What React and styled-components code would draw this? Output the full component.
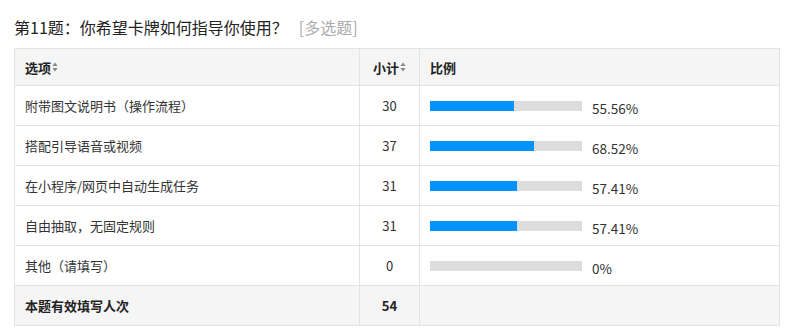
import React from "react";
import styled, { createGlobalStyle } from "styled-components";

const Global = createGlobalStyle`
  html, body { margin: 0; padding: 0; background: #fff; }
  body { font-family: "Noto Sans CJK SC", "Noto Sans", sans-serif; color: #333; }
`;

const Page = styled.div`
  padding: 16px 8px 0 14px;
`;

const Title = styled.div`
  font-size: 16px;
  line-height: 22px;
  color: #222;
  margin-bottom: 10px;
  display: flex;
  align-items: center;
`;

const Tag = styled.span`
  color: #aaa;
  margin-left: 11px;
`;

const Table = styled.table`
  width: 765px;
  border-collapse: collapse;
  table-layout: fixed;
  font-size: 13px;
`;

const Th = styled.th`
  height: 36px;
  padding: 0 0 0 ${(p) => (p.$center ? 0 : 10)}px;
  text-align: ${(p) => (p.$center ? "center" : "left")};
  background: #f5f5f5;
  border: 1px solid #e3e3e3;
  font-weight: 700;
  color: #222;
`;

const Td = styled.td`
  height: 39px;
  padding: 0 0 0 ${(p) => (p.$center ? 0 : 10)}px;
  text-align: ${(p) => (p.$center ? "center" : "left")};
  border: 1px solid #e3e3e3;
  background: ${(p) => (p.$foot ? "#f5f5f5" : "#fff")};
  font-weight: ${(p) => (p.$foot ? 700 : 400)};
  color: ${(p) => (p.$foot ? "#222" : "#333")};
`;

const HeadLabel = styled.span`
  display: inline-flex;
  align-items: center;
  gap: 1px;
`;

const Ratio = styled.div`
  display: flex;
  align-items: center;
`;

const Bar = styled.div`
  width: 152px;
  height: 10px;
  background: #dddddd;
  flex: none;
`;

const Fill = styled.div`
  height: 100%;
  background: #0092ff;
`;

const Pct = styled.span`
  margin-left: 10px;
  margin-top: 5px;
  font-size: 13.5px;
  color: #333;
`;

const SortIcon = () => (
  <svg width="6" height="10" viewBox="0 0 6 10">
    <path d="M3 0.5 L5.6 4 H0.4 Z" fill="#888" />
    <path d="M3 9.5 L5.6 6 H0.4 Z" fill="#888" />
  </svg>
);

const rows = [
  ["附带图文说明书（操作流程）", 30, 55.56],
  ["搭配引导语音或视频", 37, 68.52],
  ["在小程序/网页中自动生成任务", 31, 57.41],
  ["自由抽取，无固定规则", 31, 57.41],
  ["其他（请填写）", 0, 0],
];

export default function App() {
  return (
    <Page>
      <Global />
      <Title>
        第11题：你希望卡牌如何指导你使用？<Tag>[多选题]</Tag>
      </Title>
      <Table>
        <colgroup>
          <col style={{ width: 345 }} />
          <col style={{ width: 60 }} />
          <col style={{ width: 360 }} />
        </colgroup>
        <thead>
          <tr>
            <Th>
              <HeadLabel>
                选项
                <SortIcon />
              </HeadLabel>
            </Th>
            <Th $center>
              <HeadLabel>
                小计
                <SortIcon />
              </HeadLabel>
            </Th>
            <Th>比例</Th>
          </tr>
        </thead>
        <tbody>
          {rows.map(([label, n, p]) => (
            <tr key={label}>
              <Td>{label}</Td>
              <Td $center>{n}</Td>
              <Td>
                <Ratio>
                  <Bar>
                    <Fill style={{ width: `${p}%` }} />
                  </Bar>
                  <Pct>{p === 0 ? "0%" : `${p.toFixed(2)}%`}</Pct>
                </Ratio>
              </Td>
            </tr>
          ))}
          <tr>
            <Td $foot>本题有效填写人次</Td>
            <Td $foot $center>54</Td>
            <Td $foot></Td>
          </tr>
        </tbody>
      </Table>
    </Page>
  );
}
